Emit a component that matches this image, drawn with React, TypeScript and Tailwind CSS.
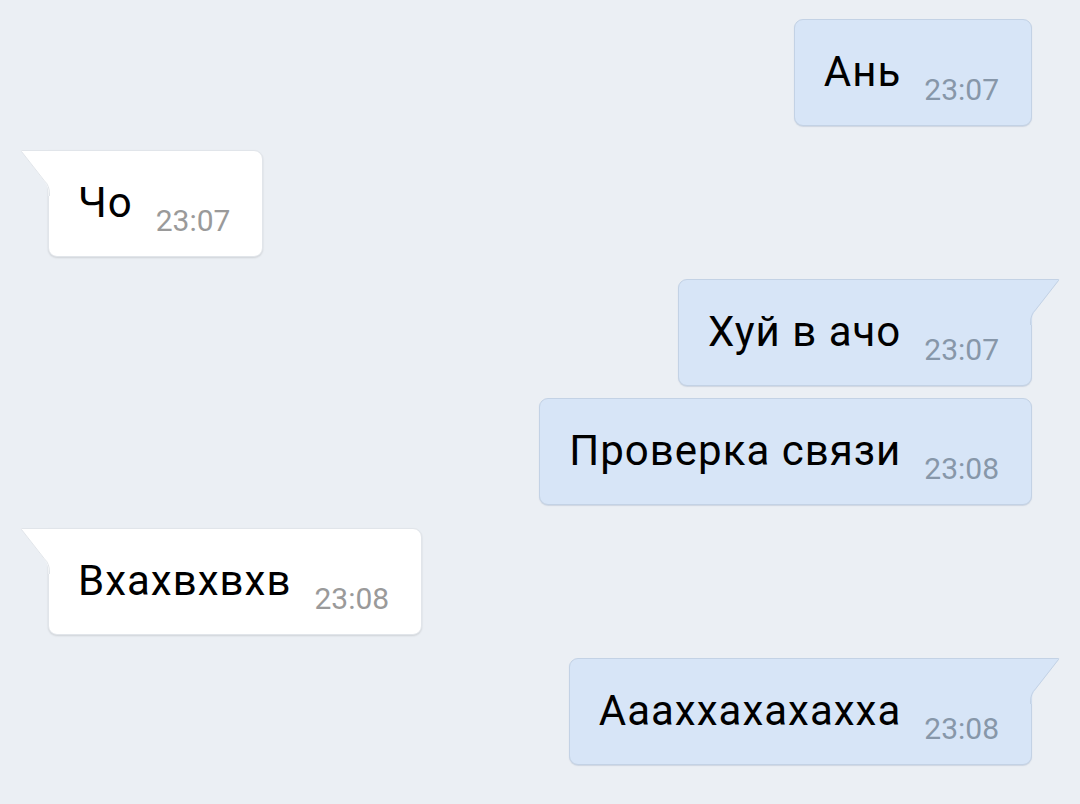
const messages = [
  { id: 1, out: true, text: 'Ань', time: '23:07', tail: false, gap: 'mt-0' },
  { id: 2, out: false, text: 'Чо', time: '23:07', tail: true, gap: 'mt-[24px]' },
  { id: 3, out: true, text: 'Хуй в ачо', time: '23:07', tail: true, gap: 'mt-[22px]' },
  { id: 4, out: true, text: 'Проверка связи', time: '23:08', tail: false, gap: 'mt-[12px]' },
  { id: 5, out: false, text: 'Вхахвхвхв', time: '23:08', tail: true, gap: 'mt-[23px]' },
  { id: 6, out: true, text: 'Аааххахахахха', time: '23:08', tail: true, gap: 'mt-[23px]' },
]

const OutTail = () => (
  <svg className="absolute top-[-1px] right-[-29px] w-[31px] h-[46px]" viewBox="0 0 31 46">
    <path d="M0 0 H29 Q30.5 0 29.8 1.2 L7 31 Q2.5 36 2.5 44 V46 H0 Z" fill="#d7e5f7" />
    <path d="M0 0.5 H29 Q30.3 0.5 29.5 1.5 L6.6 30.8 Q1.5 35.5 1.5 44 V46" fill="none" stroke="#c3d2e5" strokeWidth="1" />
  </svg>
)

const InTail = () => (
  <svg className="absolute top-[-1px] left-[-29px] w-[31px] h-[46px]" viewBox="0 0 31 46">
    <path d="M31 0 H2 Q0.5 0 1.2 1.2 L24 31 Q28.5 36 28.5 44 V46 H31 Z" fill="#ffffff" />
    <path d="M31 0.5 H2 Q0.7 0.5 1.5 1.5 L24.4 30.8 Q29.5 35.5 29.5 44 V46" fill="none" stroke="#e1e5ea" strokeWidth="1" />
  </svg>
)

const Bubble = ({ m }: { m: (typeof messages)[number] }) => {
  const corner = m.tail ? (m.out ? 'rounded-tr-none' : 'rounded-tl-none') : ''
  const look = m.out
    ? 'bg-[#d7e5f7] border-[#c3d2e5] shadow-[0_1px_1px_rgba(120,140,170,0.25)]'
    : 'bg-white border-[#e1e5ea] shadow-[0_1px_2px_rgba(0,0,0,0.12)]'
  return (
    <div className={`${m.gap} flex ${m.out ? 'justify-end' : 'justify-start'}`}>
      <div className={`relative flex items-end border rounded-[9px] ${corner} ${look} pl-[29px] pr-[32px] pt-[27px] pb-[20px]`}>
        {m.tail && (m.out ? <OutTail /> : <InTail />)}
        <span className="text-[42px] leading-[50px] tracking-[1px] text-black mb-[8px] whitespace-nowrap">{m.text}</span>
        <span className={`ml-[23px] text-[30px] leading-[30px] ${m.out ? 'text-[#8797a9]' : 'text-[#9a9a9a]'}`}>
          {m.time}
        </span>
      </div>
    </div>
  )
}

export default function App() {
  return (
    <div className="w-[1080px] h-[804px] overflow-hidden bg-[#ebeff4] px-[48px] pt-[19px] font-['Roboto',sans-serif]">
      <div className="flex flex-col">
        {messages.map((m) => (
          <Bubble key={m.id} m={m} />
        ))}
      </div>
    </div>
  )
}
